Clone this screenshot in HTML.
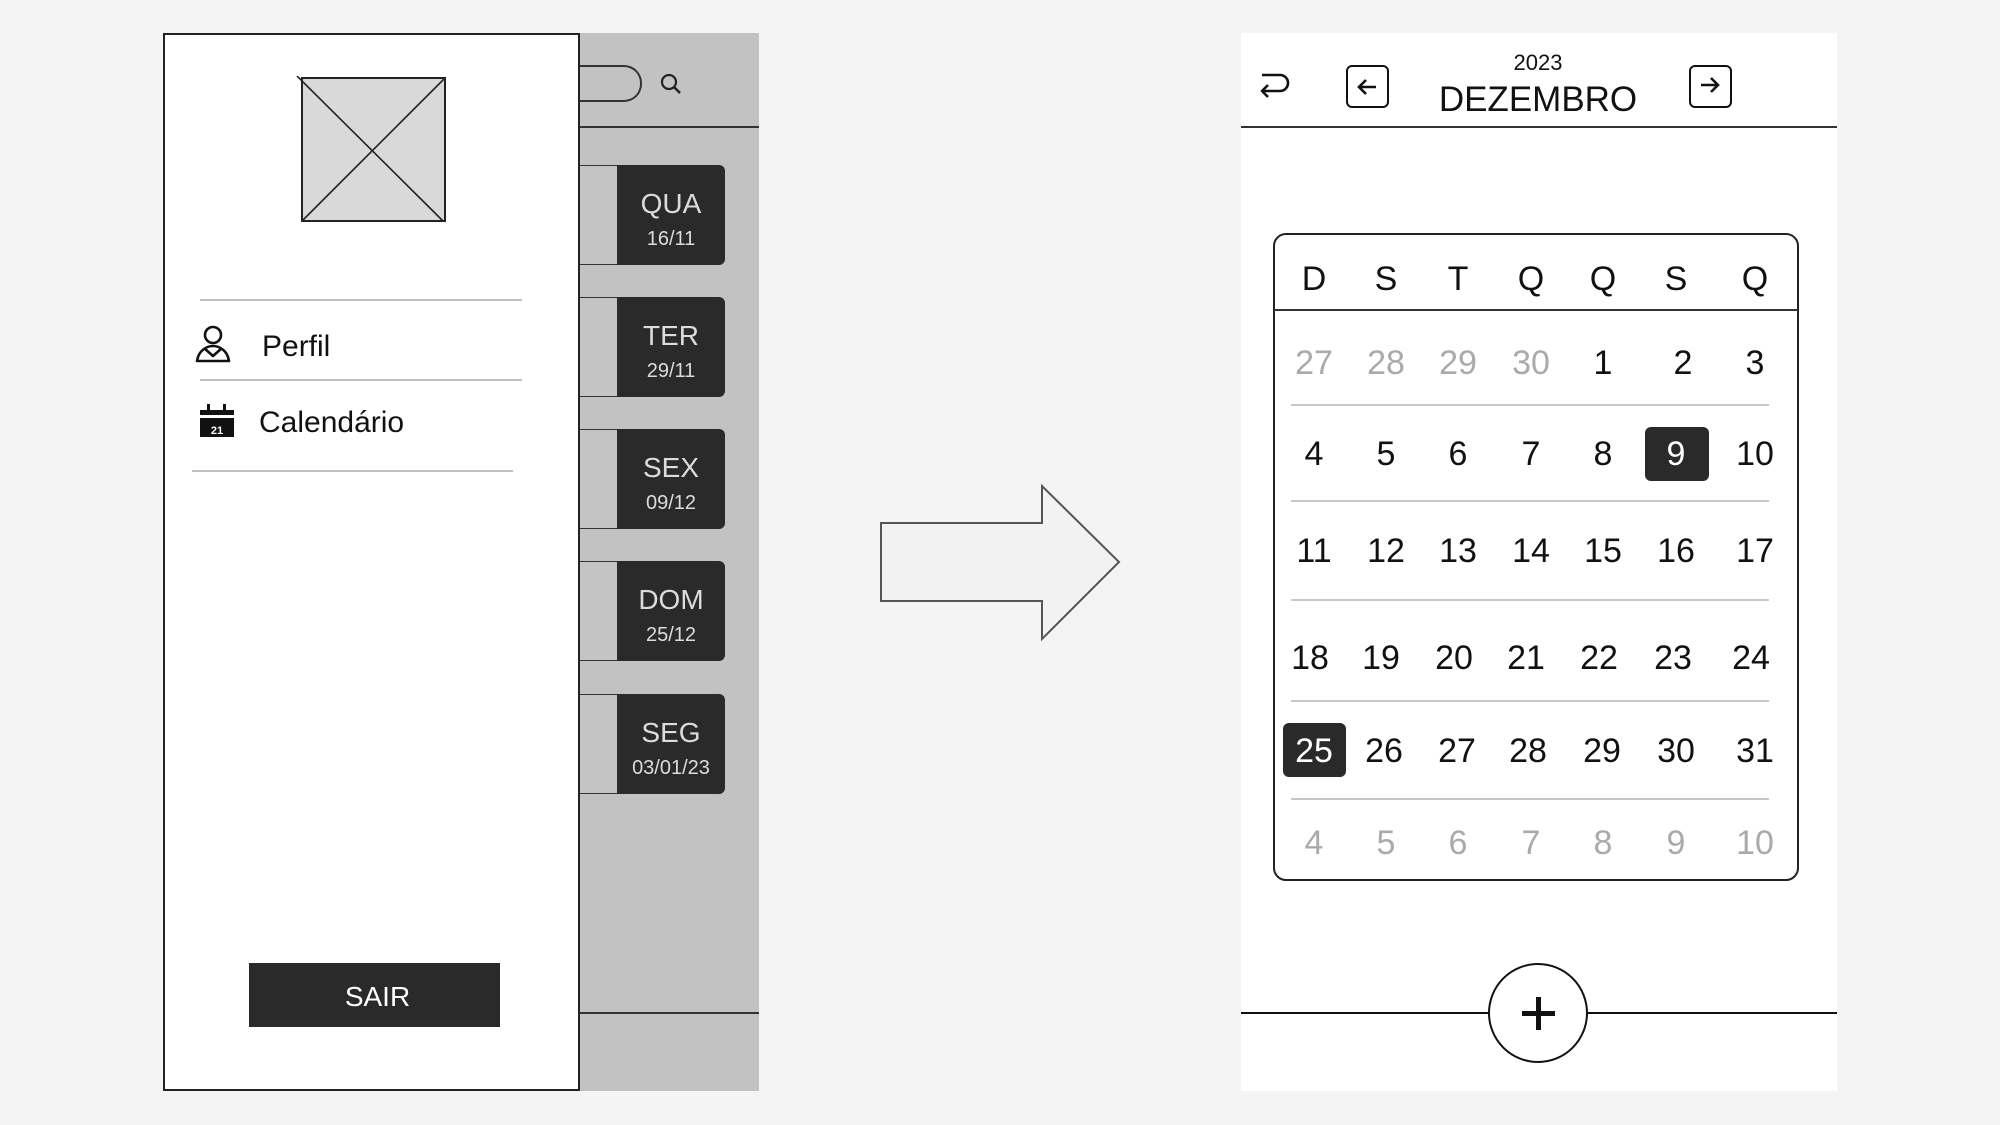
<!DOCTYPE html>
<html><head><meta charset="utf-8"><style>
*{margin:0;padding:0;box-sizing:border-box}
body{width:2000px;height:1125px;background:#f4f4f4;position:relative;overflow:hidden;font-family:"Liberation Sans",sans-serif;color:#111}
.a{position:absolute}
.card{position:absolute;left:579px;width:146px;height:100px}
.card .l{position:absolute;left:0;top:0;width:40px;height:100%;background:#c4c4c4;border:1.5px solid #333;border-left:none}
.card .d{position:absolute;left:38px;top:0;width:108px;height:100%;background:#2a2a2a;border-radius:0 6px 6px 0;color:#dcdcdc;text-align:center}
.card .d b{display:block;font-weight:normal;font-size:28px;margin-top:24px;line-height:30px}
.card .d i{display:block;font-style:normal;font-size:20px;margin-top:9px;line-height:22px}
.row{position:absolute;left:0;width:2000px;height:40px;font-size:34px;line-height:40px}
.row span{position:absolute;width:80px;text-align:center}
.c1{left:1274px}.c2{left:1346px}.c3{left:1418px}.c4{left:1491px}.c5{left:1563px}.c6{left:1636px}.c7{left:1715px}
.g{color:#aaa}
.sep{position:absolute;left:1291px;width:478px;height:2px;background:#c8c8c8}
.hl{position:absolute;background:#2a2a2a;border-radius:6px}
.w{color:#fff}
</style></head><body>
<div class="a" style="left:579px;top:33px;width:180px;height:1058px;background:#c2c2c2"></div>
<div class="a" style="left:560px;top:65px;width:82px;height:37px;border:2px solid #333;border-left:none;border-radius:0 18px 18px 0"></div>
<svg class="a" style="left:658px;top:71px" width="28" height="28" viewBox="0 0 28 28"><circle cx="11" cy="11" r="7" fill="none" stroke="#222" stroke-width="2.2"/><path d="M16 16l6 6" stroke="#222" stroke-width="2.5"/></svg>
<div class="a" style="left:579px;top:126px;width:180px;height:2px;background:#333"></div>
<div class="a" style="left:579px;top:1012px;width:180px;height:2px;background:#333"></div>
<div class="card" style="top:165px"><div class="l"></div><div class="d"><b>QUA</b><i>16/11</i></div></div>
<div class="card" style="top:297px"><div class="l"></div><div class="d"><b>TER</b><i>29/11</i></div></div>
<div class="card" style="top:429px"><div class="l"></div><div class="d"><b>SEX</b><i>09/12</i></div></div>
<div class="card" style="top:561px"><div class="l"></div><div class="d"><b>DOM</b><i>25/12</i></div></div>
<div class="card" style="top:694px"><div class="l"></div><div class="d"><b>SEG</b><i>03/01/23</i></div></div>

<div class="a" style="left:163px;top:33px;width:417px;height:1058px;background:#fff;border:2px solid #222"></div>
<svg class="a" style="left:296px;top:76px" width="152" height="148" viewBox="0 0 152 148"><rect x="6" y="2" width="143" height="143" fill="#d9d9d9" stroke="#222" stroke-width="2"/><path d="M1 0L147 145M6 145L149 2" stroke="#222" stroke-width="1.6"/></svg>
<div class="a" style="left:200px;top:299px;width:322px;height:2px;background:#c0c0c0"></div>
<div class="a" style="left:200px;top:379px;width:322px;height:2px;background:#c0c0c0"></div>
<div class="a" style="left:192px;top:470px;width:321px;height:2px;background:#c0c0c0"></div>
<svg class="a" style="left:194px;top:324px" width="38" height="40" viewBox="0 0 38 40"><circle cx="19" cy="11" r="8" fill="none" stroke="#111" stroke-width="2.6"/><path d="M3 37h32l-1-4c-2-6-8-11-15-11S6 27 4 33zM10 24l9 8 9-8" fill="none" stroke="#111" stroke-width="2.6" stroke-linejoin="round"/></svg>
<div class="a" style="left:262px;top:329px;font-size:30px;line-height:36px">Perfil</div>
<svg class="a" style="left:199px;top:402px" width="38" height="36" viewBox="0 0 38 36"><rect x="1" y="8" width="34" height="27" fill="#111"/><rect x="1" y="13" width="34" height="3" fill="#fff"/><rect x="8" y="2" width="3" height="9" fill="#111"/><rect x="24" y="2" width="3" height="9" fill="#111"/><text x="18" y="32" font-size="11" font-weight="bold" fill="#fff" text-anchor="middle" font-family="Liberation Sans">21</text></svg>
<div class="a" style="left:259px;top:405px;font-size:30px;line-height:36px">Calendário</div>
<div class="a" style="left:249px;top:963px;width:251px;height:64px;background:#2a2a2a;color:#fff;font-size:28px;line-height:68px;text-align:center;padding-left:6px">SAIR</div>

<svg class="a" style="left:0;top:0" width="2000" height="1125"><polygon points="881,523 1042,523 1042,486 1119,562 1042,639 1042,601 881,601" fill="#f2f2f2" stroke="#555" stroke-width="2"/></svg>

<div class="a" style="left:1241px;top:33px;width:596px;height:1058px;background:#fff"></div>
<div class="a" style="left:1241px;top:126px;width:596px;height:2px;background:#333"></div>
<svg class="a" style="left:1258px;top:70px" width="36" height="36" viewBox="0 0 36 36"><path d="M4 5h18a8 8 0 0 1 0 16H4M10 15l-6 6 6 6" fill="none" stroke="#111" stroke-width="2.6" stroke-linejoin="round"/></svg>
<div class="a" style="left:1346px;top:65px;width:43px;height:43px;border:2.5px solid #111;border-radius:6px"></div>
<svg class="a" style="left:1352px;top:72px" width="32" height="30" viewBox="0 0 32 30"><path d="M24 15H7M14 8l-7 7 7 7" fill="none" stroke="#111" stroke-width="2.6"/></svg>
<div class="a" style="left:1689px;top:65px;width:43px;height:43px;border:2.5px solid #111;border-radius:6px"></div>
<svg class="a" style="left:1694px;top:70px" width="32" height="30" viewBox="0 0 32 30"><path d="M7 15h17M17 8l7 7-7 7" fill="none" stroke="#111" stroke-width="2.6"/></svg>
<div class="a" style="left:1438px;top:50px;width:200px;text-align:center;font-size:22px;line-height:26px">2023</div>
<div class="a" style="left:1388px;top:80px;width:300px;text-align:center;font-size:35px;line-height:40px">DEZEMBRO</div>

<div class="a" style="left:1273px;top:233px;width:526px;height:648px;border:2px solid #222;border-radius:13px"></div>
<div class="a" style="left:1274px;top:309px;width:524px;height:2px;background:#333"></div>
<div class="row" style="top:259px"><span class="c1">D</span><span class="c2">S</span><span class="c3">T</span><span class="c4">Q</span><span class="c5">Q</span><span class="c6">S</span><span class="c7">Q</span></div>

<div class="hl" style="left:1645px;top:427px;width:64px;height:54px"></div>
<div class="hl" style="left:1283px;top:723px;width:63px;height:54px"></div>

<div class="row" style="top:343px"><span class="c1 g">27</span><span class="c2 g">28</span><span class="c3 g">29</span><span class="c4 g">30</span><span class="c5">1</span><span class="c6" style="left:1643px">2</span><span class="c7">3</span></div>
<div class="sep" style="top:404px"></div>
<div class="row" style="top:434px"><span class="c1">4</span><span class="c2">5</span><span class="c3">6</span><span class="c4">7</span><span class="c5">8</span><span class="c6 w">9</span><span class="c7">10</span></div>
<div class="sep" style="top:500px"></div>
<div class="row" style="top:531px"><span class="c1">11</span><span class="c2">12</span><span class="c3">13</span><span class="c4">14</span><span class="c5">15</span><span class="c6">16</span><span class="c7">17</span></div>
<div class="sep" style="top:599px"></div>
<div class="row" style="top:638px"><span class="c1" style="left:1270px">18</span><span class="c2" style="left:1341px">19</span><span class="c3" style="left:1414px">20</span><span class="c4" style="left:1486px">21</span><span class="c5" style="left:1559px">22</span><span class="c6" style="left:1633px">23</span><span class="c7" style="left:1711px">24</span></div>
<div class="sep" style="top:700px"></div>
<div class="row" style="top:731px"><span class="c1 w">25</span><span class="c2" style="left:1344px">26</span><span class="c3" style="left:1417px">27</span><span class="c4" style="left:1488px">28</span><span class="c5" style="left:1562px">29</span><span class="c6">30</span><span class="c7">31</span></div>
<div class="sep" style="top:798px"></div>
<div class="row g" style="top:823px"><span class="c1">4</span><span class="c2">5</span><span class="c3">6</span><span class="c4">7</span><span class="c5">8</span><span class="c6">9</span><span class="c7">10</span></div>

<div class="a" style="left:1241px;top:1012px;width:596px;height:2px;background:#111"></div>
<div class="a" style="left:1488px;top:963px;width:100px;height:100px;border:2.5px solid #111;border-radius:50%;background:#fff"></div>
<div class="a" style="left:1522px;top:1011px;width:33px;height:5px;background:#111"></div>
<div class="a" style="left:1536px;top:997px;width:5px;height:33px;background:#111"></div>
</body></html>
